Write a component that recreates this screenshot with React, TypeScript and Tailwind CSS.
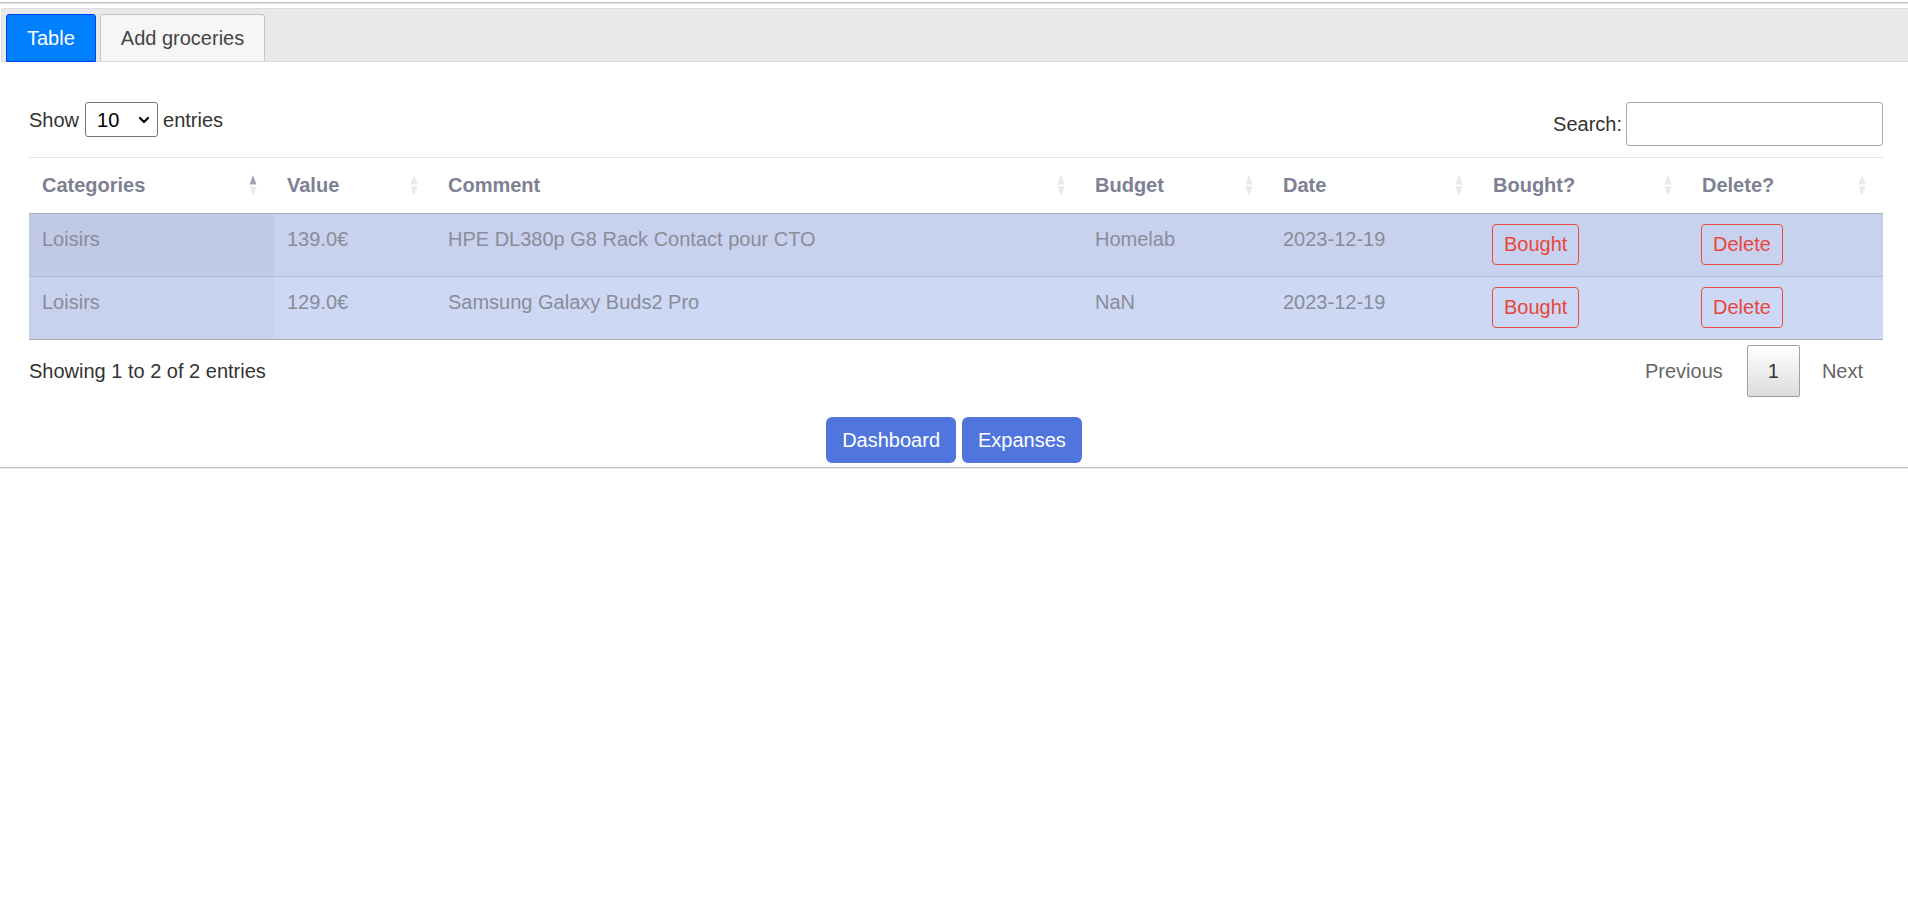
import { ChevronDown } from "lucide-react"

const columns = [
  { label: "Categories", width: "w-[245px]", sorted: true },
  { label: "Value", width: "w-[161px]", sorted: false },
  { label: "Comment", width: "w-[647px]", sorted: false },
  { label: "Budget", width: "w-[188px]", sorted: false },
  { label: "Date", width: "w-[210px]", sorted: false },
  { label: "Bought?", width: "w-[209px]", sorted: false },
  { label: "Delete?", width: "w-[194px]", sorted: false },
]

const rows = [
  { category: "Loisirs", value: "139.0€", comment: "HPE DL380p G8 Rack Contact pour CTO", budget: "Homelab", date: "2023-12-19" },
  { category: "Loisirs", value: "129.0€", comment: "Samsung Galaxy Buds2 Pro", budget: "NaN", date: "2023-12-19" },
]

function SortIcon({ asc }: { asc: boolean }) {
  return (
    <svg width="8" height="21" viewBox="0 0 8 21" className="shrink-0">
      <polygon points="4,0 7.5,9.5 0.5,9.5" fill={asc ? "#a2a5b1" : "#e8e9ed"} />
      <polygon points="0.5,11.5 7.5,11.5 4,21" fill="#e8e9ed" />
    </svg>
  )
}

function RowButton({ label }: { label: string }) {
  return (
    <button className="h-[41px] px-[11px] border border-[#e74c3c] rounded-[4px] text-[#e8453c] leading-[23px] bg-transparent">
      {label}
    </button>
  )
}

export default function App() {
  return (
    <div className="min-h-screen bg-white font-['Liberation_Sans',Arial,sans-serif] text-[20px] text-[#333333]">
      {/* top rule */}
      <div className="mt-[2px] h-[2px] border-t border-[#c4c4c4] border-b border-b-[#e6e6e6]" />

      {/* tab bar */}
      <div className="mt-[4px] ml-[1px] h-[54px] border-l border-t border-b border-[#dddddd] bg-[#e9e9e9] rounded-tl-[3px] pt-[5px] pl-[4px] flex items-start gap-[4px]">
        <div className="h-[48px] px-[20px] flex items-center bg-[#007fff] border border-[#003eff] rounded-t-[3px] text-white">
          Table
        </div>
        <div className="h-[47px] px-[20px] flex items-center bg-[#f6f6f6] border border-b-0 border-[#c5c5c5] rounded-t-[3px] text-[#454545]">
          Add groceries
        </div>
      </div>

      {/* panel */}
      <div className="pl-[29px] pr-[25px] pt-[40px]">
        <div className="flex justify-between items-start h-[44px]">
          <div className="flex items-center h-[35px]">
            <span>Show</span>
            <div className="relative ml-[6px] mr-[5px]">
              <select className="appearance-none w-[73px] h-[35px] border border-[#767676] rounded-[3px] pl-[11px] bg-white text-[20px] text-black">
                <option>10</option>
              </select>
              <ChevronDown className="absolute right-[6px] top-[10px] w-[16px] h-[16px] text-black pointer-events-none" strokeWidth={3.2} />
            </div>
            <span>entries</span>
          </div>
          <div className="flex items-center h-[44px]">
            <span>Search:</span>
            <input className="ml-[4px] w-[257px] h-[44px] border border-[#aaaaaa] rounded-[3px] bg-white" />
          </div>
        </div>

        <table className="mt-[11px] w-full table-fixed border-collapse">
          <colgroup>
            {columns.map((c) => (
              <col key={c.label} className={c.width} />
            ))}
          </colgroup>
          <thead>
            <tr>
              {columns.map((c) => (
                <th
                  key={c.label}
                  className="border-t border-[#e3e3e8] border-b border-b-[#a9acb6] pl-[13px] pr-[17px] py-[12px] text-left font-bold text-[#7d8193] leading-[31px]"
                >
                  <div className="flex items-center justify-between">
                    <span>{c.label}</span>
                    <SortIcon asc={c.sorted} />
                  </div>
                </th>
              ))}
            </tr>
          </thead>
          <tbody className="text-[#8a8c99]">
            {rows.map((r, i) => {
              const odd = i === 0
              const cell = `align-top pt-[10px] pb-[11px] pl-[13px] pr-[12px] leading-[30px] ${odd ? "bg-[#c8d2ee]" : "bg-[#cdd8f5]"}`
              return (
                <tr key={i} className={odd ? "border-b border-[#b2b8cc]" : "border-b border-[#a9abb3]"}>
                  <td className={`align-top pt-[10px] pb-[11px] pl-[13px] pr-[12px] leading-[30px] ${odd ? "bg-[#c0cae6]" : "bg-[#c8d2ef]"}`}>
                    {r.category}
                  </td>
                  <td className={cell}>{r.value}</td>
                  <td className={cell}>{r.comment}</td>
                  <td className={cell}>{r.budget}</td>
                  <td className={cell}>{r.date}</td>
                  <td className={`${cell} !pl-[12px]`}>
                    <RowButton label="Bought" />
                  </td>
                  <td className={`${cell} !pl-[12px]`}>
                    <RowButton label="Delete" />
                  </td>
                </tr>
              )
            })}
          </tbody>
        </table>

        <div className="mt-[5px] flex items-center justify-between">
          <div>Showing 1 to 2 of 2 entries</div>
          <div className="flex items-center text-[#666666]">
            <span className="px-[22px] leading-[30px]">Previous</span>
            <span className="ml-[2px] h-[52px] px-[20px] flex items-center border border-[#a0a0a0] rounded-[2px] bg-gradient-to-b from-white to-[#dcdcdc] text-[#333333]">
              1
            </span>
            <span className="ml-[2px] px-[20px] leading-[30px]">Next</span>
          </div>
        </div>
      </div>

      {/* nav buttons */}
      <div className="mt-[20px] flex justify-center gap-[6px]">
        <button className="h-[46px] px-[16px] rounded-[6px] bg-[#5076de] text-white">Dashboard</button>
        <button className="h-[46px] px-[16px] rounded-[6px] bg-[#5076de] text-white">Expanses</button>
      </div>

      <div className="mt-[4px] h-[2px] border-t border-[#c4c4c4] border-b border-b-[#e6e6e6]" />
    </div>
  )
}
